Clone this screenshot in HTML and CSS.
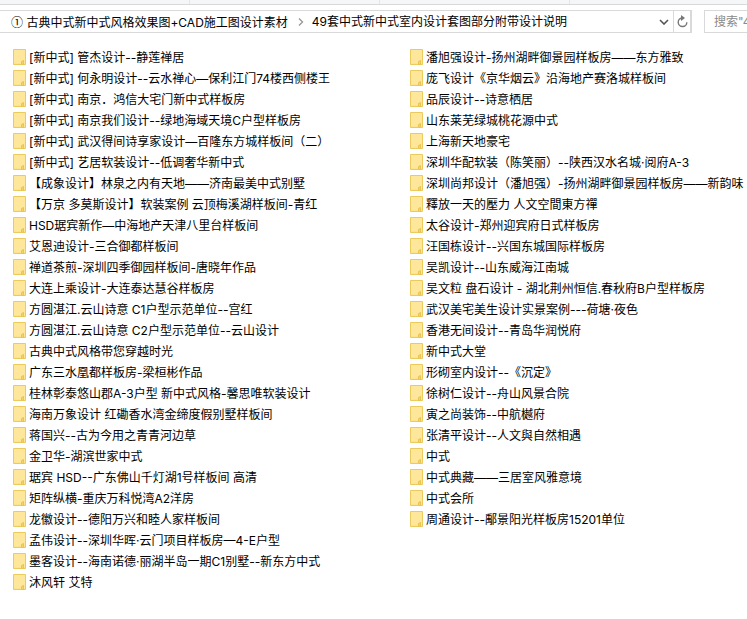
FILE: index.html
```html
<!DOCTYPE html>
<html lang="zh-CN">
<head>
<meta charset="utf-8">
<title>49套中式新中式室内设计套图部分附带设计说明</title>
<link rel="stylesheet" href="styles.css">
</head>
<body>
<svg class="defs" width="0" height="0" aria-hidden="true">
  <symbol id="folder" viewBox="0 0 13 16">
    <path d="M0.5 0.5H12.5V15.5H0.5Z" fill="#fde38a" stroke="#eccb5e"/>
    <path d="M1 1H12V14H1Z" fill="#fee69a"/>
    <path d="M10.5 11.5V15.5H8.5V12.5Z" fill="#f6d568" stroke="#e8c454" stroke-width="1"/>
  </symbol>
</svg>
<div class="tabs"><span class="tab t1"></span><span class="tab t2"></span><span class="tab t3"></span></div>
<header class="toolbar">
  <div class="address">
    <span class="crumbs">
      <span class="crumb"><span class="num">①</span> 古典中式新中式风格效果图+CAD施工图设计素材</span>
      <svg class="sep" width="6" height="8" viewBox="0 0 6 8"><path d="M1 0.5L4.5 4L1 7.5" fill="none" stroke="#9a9a9a" stroke-width="1.4"/></svg>
      <span class="crumb">49套中式新中式室内设计套图部分附带设计说明</span>
    </span>
    <svg class="chev" width="10" height="6" viewBox="0 0 10 6"><path d="M1 1L5 5L9 1" fill="none" stroke="#555" stroke-width="1.6"/></svg>
    <span class="refresh"><svg width="11" height="13" viewBox="0 0 11 13"><path d="M5 3A4.3 4.3 0 1 0 9.8 7.2" fill="none" stroke="#777" stroke-width="1.4"/><path d="M4 0L8 3L4 6Z" fill="#777"/></svg></span>
  </div>
  <div class="search">搜索"4</div>
</header>
<main class="listing">
  <ul class="col col-left">
    <li class="item"><svg class="icon"><use href="#folder"/></svg><span>[新中式] 管杰设计--静莲禅居</span></li>
    <li class="item"><svg class="icon"><use href="#folder"/></svg><span>[新中式] 何永明设计--云水禅心—保利江门74楼西侧楼王</span></li>
    <li class="item"><svg class="icon"><use href="#folder"/></svg><span>[新中式] 南京．鸿信大宅门新中式样板房</span></li>
    <li class="item"><svg class="icon"><use href="#folder"/></svg><span>[新中式] 南京我们设计--绿地海域天境C户型样板房</span></li>
    <li class="item"><svg class="icon"><use href="#folder"/></svg><span>[新中式] 武汉得间诗享家设计—百隆东方城样板间（二）</span></li>
    <li class="item"><svg class="icon"><use href="#folder"/></svg><span>[新中式] 艺居软装设计--低调奢华新中式</span></li>
    <li class="item"><svg class="icon"><use href="#folder"/></svg><span>【成象设计】林泉之内有天地——济南最美中式别墅</span></li>
    <li class="item"><svg class="icon"><use href="#folder"/></svg><span>【万京 多莫斯设计】软装案例 云顶梅溪湖样板间-青红</span></li>
    <li class="item"><svg class="icon"><use href="#folder"/></svg><span>HSD琚宾新作—中海地产天津八里台样板间</span></li>
    <li class="item"><svg class="icon"><use href="#folder"/></svg><span>艾恩迪设计-三合御都样板间</span></li>
    <li class="item"><svg class="icon"><use href="#folder"/></svg><span>禅道茶煎-深圳四季御园样板间-唐晓年作品</span></li>
    <li class="item"><svg class="icon"><use href="#folder"/></svg><span>大连上乘设计-大连泰达慧谷样板房</span></li>
    <li class="item"><svg class="icon"><use href="#folder"/></svg><span>方圆湛江.云山诗意 C1户型示范单位--宫红</span></li>
    <li class="item"><svg class="icon"><use href="#folder"/></svg><span>方圆湛江.云山诗意 C2户型示范单位--云山设计</span></li>
    <li class="item"><svg class="icon"><use href="#folder"/></svg><span>古典中式风格带您穿越时光</span></li>
    <li class="item"><svg class="icon"><use href="#folder"/></svg><span>广东三水凰都样板房-梁桓彬作品</span></li>
    <li class="item"><svg class="icon"><use href="#folder"/></svg><span>桂林彰泰悠山郡A-3户型 新中式风格-馨思唯软装设计</span></li>
    <li class="item"><svg class="icon"><use href="#folder"/></svg><span>海南万象设计 红磡香水湾金缔度假别墅样板间</span></li>
    <li class="item"><svg class="icon"><use href="#folder"/></svg><span>蒋国兴--古为今用之青青河边草</span></li>
    <li class="item"><svg class="icon"><use href="#folder"/></svg><span>金卫华-湖滨世家中式</span></li>
    <li class="item"><svg class="icon"><use href="#folder"/></svg><span>琚宾 HSD--广东佛山千灯湖1号样板间 高清</span></li>
    <li class="item"><svg class="icon"><use href="#folder"/></svg><span>矩阵纵横-重庆万科悦湾A2洋房</span></li>
    <li class="item"><svg class="icon"><use href="#folder"/></svg><span>龙徽设计--德阳万兴和睦人家样板间</span></li>
    <li class="item"><svg class="icon"><use href="#folder"/></svg><span>孟伟设计--深圳华晖·云门项目样板房—4-E户型</span></li>
    <li class="item"><svg class="icon"><use href="#folder"/></svg><span>墨客设计--海南诺德·丽湖半岛一期C1别墅--新东方中式</span></li>
    <li class="item"><svg class="icon"><use href="#folder"/></svg><span>沐风轩 艾特</span></li>
  </ul>
  <ul class="col col-right">
    <li class="item"><svg class="icon"><use href="#folder"/></svg><span>潘旭强设计-扬州湖畔御景园样板房——东方雅致</span></li>
    <li class="item"><svg class="icon"><use href="#folder"/></svg><span>庞飞设计《京华烟云》沿海地产赛洛城样板间</span></li>
    <li class="item"><svg class="icon"><use href="#folder"/></svg><span>品辰设计--诗意栖居</span></li>
    <li class="item"><svg class="icon"><use href="#folder"/></svg><span>山东莱芜绿城桃花源中式</span></li>
    <li class="item"><svg class="icon"><use href="#folder"/></svg><span>上海新天地豪宅</span></li>
    <li class="item"><svg class="icon"><use href="#folder"/></svg><span>深圳华配软装（陈笑丽）--陕西汉水名城·阅府A-3</span></li>
    <li class="item"><svg class="icon"><use href="#folder"/></svg><span>深圳尚邦设计（潘旭强）-扬州湖畔御景园样板房——新韵味</span></li>
    <li class="item"><svg class="icon"><use href="#folder"/></svg><span>釋放一天的壓力 人文空間東方禪</span></li>
    <li class="item"><svg class="icon"><use href="#folder"/></svg><span>太谷设计-郑州迎宾府日式样板房</span></li>
    <li class="item"><svg class="icon"><use href="#folder"/></svg><span>汪国栋设计--兴国东城国际样板房</span></li>
    <li class="item"><svg class="icon"><use href="#folder"/></svg><span>吴凯设计--山东威海江南城</span></li>
    <li class="item"><svg class="icon"><use href="#folder"/></svg><span>吴文粒 盘石设计 - 湖北荆州恒信.春秋府B户型样板房</span></li>
    <li class="item"><svg class="icon"><use href="#folder"/></svg><span>武汉美宅美生设计实景案例---荷塘·夜色</span></li>
    <li class="item"><svg class="icon"><use href="#folder"/></svg><span>香港无间设计--青岛华润悦府</span></li>
    <li class="item"><svg class="icon"><use href="#folder"/></svg><span>新中式大堂</span></li>
    <li class="item"><svg class="icon"><use href="#folder"/></svg><span>形砌室内设计--《沉定》</span></li>
    <li class="item"><svg class="icon"><use href="#folder"/></svg><span>徐树仁设计--舟山风景合院</span></li>
    <li class="item"><svg class="icon"><use href="#folder"/></svg><span>寅之尚装饰--中航樾府</span></li>
    <li class="item"><svg class="icon"><use href="#folder"/></svg><span>张清平设计--人文與自然相遇</span></li>
    <li class="item"><svg class="icon"><use href="#folder"/></svg><span>中式</span></li>
    <li class="item"><svg class="icon"><use href="#folder"/></svg><span>中式典藏——三居室风雅意境</span></li>
    <li class="item"><svg class="icon"><use href="#folder"/></svg><span>中式会所</span></li>
    <li class="item"><svg class="icon"><use href="#folder"/></svg><span>周通设计--鄅景阳光样板房15201单位</span></li>
  </ul>
</main>
</body>
</html>
```
FILE: styles.css
```css
* { box-sizing: border-box; }
html, body { margin: 0; padding: 0; height: 100%; overflow: hidden; background: #fff; }
body {
  font-family: "Inter", "Noto Sans CJK SC", "Liberation Sans", sans-serif;
  font-size: 12px;
  color: #000;
  width: 747px;
}
.defs { position: absolute; }
.tabs {
  display: flex;
  height: 5px;
  background: #f5f6f7;
  border-bottom: 1px solid #d9d9d9;
}
.tab { width: 190px; border-right: 1px solid #e6e6e6; }
.toolbar {
  display: flex;
  align-items: stretch;
  height: 23px;
  margin-top: 5px;
  margin-left: -1px;
  gap: 12px;
}
.address {
  width: 693px;
  flex: none;
  display: flex;
  align-items: center;
  border: 2px solid #d9d9d9;
  border-width: 1px 2px 1px 1px;
}
.crumbs {
  flex: 1;
  display: flex;
  align-items: center;
  padding-left: 11px;
  white-space: nowrap;
  line-height: 21px;
  overflow: hidden;
}
.num { font-family: "Noto Sans CJK SC", sans-serif; }
.sep { margin: 0 8px 0 10px; flex: none; }
.chev { flex: none; margin-right: 4px; }
.refresh {
  flex: none;
  width: 17px;
  height: 21px;
  border-left: 1px solid #d9d9d9;
  display: flex;
  align-items: center;
  justify-content: center;
}
.search {
  flex: 1;
  border: 1px solid #d9d9d9;
  border-right: 0;
  padding-left: 9px;
  color: #8a8a8a;
  line-height: 21px;
  white-space: nowrap;
  overflow: hidden;
}
.listing {
  display: flex;
  padding: 13px 0 0 13px;
}
.col { list-style: none; margin: 0; padding: 0; flex: none; }
.col-left { width: 397px; }
.col-right { width: 337px; }
.item {
  display: flex;
  align-items: center;
  gap: 3px;
  height: 21px;
  white-space: nowrap;
}
.icon { width: 13px; height: 16px; flex: none; }
```
